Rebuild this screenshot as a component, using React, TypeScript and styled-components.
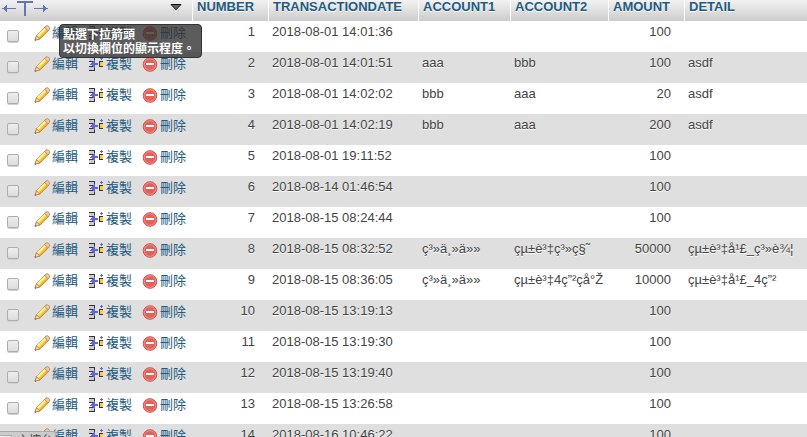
import React, { useState } from 'react';
import styled, { createGlobalStyle } from 'styled-components';

const GlobalStyle = createGlobalStyle`
  * { box-sizing: border-box; }
  body {
    margin: 0;
    background: #fff;
    color: #444;
    font-family: "Liberation Sans", "Noto Sans CJK TC", sans-serif;
    font-size: 13px;
    line-height: 15px;
  }
`;

const Page = styled.main`
  position: relative;
  height: 100vh;
  overflow: hidden;
`;

const Table = styled.table`
  width: 100%;
  table-layout: fixed;
  border-collapse: separate;
  border-spacing: 0;
`;

const Column = styled.col<{ $width?: number }>`
  width: ${(p) => (p.$width ? `${p.$width}px` : 'auto')};
`;

const HeadRow = styled.tr`
  height: 21px;
  background: linear-gradient(#f2f2f2, #cccccc);
`;

const HeadCell = styled.th<{ $end?: boolean }>`
  padding: 0 14px 7px 4px;
  border-right: 1px solid #fff;
  color: #235a81;
  font-weight: bold;
  text-align: ${(p) => (p.$end ? 'right' : 'left')};
  text-shadow: 0 1px 0 #fff;
  vertical-align: top;
  white-space: nowrap;
  line-height: 14px;
  &:last-child { border-right: 0; }
`;

const ToolHead = styled.th`
  padding: 0 10px 0 2px;
  border-right: 1px solid #fff;
  vertical-align: top;
`;

const ToolBar = styled.div`
  display: flex;
  justify-content: space-between;
  align-items: flex-start;
  svg:last-child { margin-top: 4px; }
`;

const Row = styled.tr`
  height: 31px;
  &:nth-child(even) { background: #dfdfdf; }
`;

const Cell = styled.td<{ $end?: boolean }>`
  padding: 3px 14px 0 3px;
  text-align: ${(p) => (p.$end ? 'right' : 'left')};
  text-shadow: 0 1px 0 #fff;
  vertical-align: top;
  white-space: nowrap;
`;

const ActionCell = styled.td`
  padding: 0 0 0 7px;
  vertical-align: top;
`;

const Actions = styled.div`
  display: flex;
  align-items: flex-start;
`;

const Check = styled.input`
  appearance: none;
  flex: none;
  width: 12px;
  height: 12px;
  margin: 9px 15px 0 0;
  border: 1px solid #adadad;
  border-radius: 2px;
  background: linear-gradient(#eeeeee, #dcdcdc);
  box-shadow: 0 1px 0 #d0d0d0;
  &:checked { background: #235a81; }
`;

const Action = styled.a`
  display: flex;
  flex: none;
  width: 54px;
  gap: 2px;
  padding-top: 4px;
  color: #235a81;
  text-decoration: none;
  white-space: nowrap;
  svg { flex: none; }
`;

const Tooltip = styled.div`
  position: absolute;
  top: 24px;
  left: 59px;
  padding: 3px 6px 1px 3px;
  border: 1px solid #333;
  border-radius: 4px;
  background: rgba(51, 51, 51, 0.8);
  color: #fff;
  font-weight: bold;
  white-space: nowrap;
  font-size: 12px;
  line-height: 14px;
`;

const StatusBubble = styled.div`
  position: absolute;
  left: 0;
  bottom: -14px;
  display: flex;
  gap: 5px;
  height: 20px;
  padding-right: 2px;
  border: 1px solid #aaa;
  border-left: 0;
  border-radius: 0 3px 0 0;
  background: #ccc;
  font-size: 12px;
  line-height: 18px;
  white-space: nowrap;
`;

const StatusMark = styled.span`
  width: 12px;
  height: 15px;
  margin-top: 3px;
  border: 1px solid #aaa;
  border-left: 0;
  background: linear-gradient(90deg, #fff, #ddd);
`;

const ResizeIcon = () => (
  <svg width="46" height="17" viewBox="0 0 46 17" fill="none" stroke="#6275b5" shapeRendering="crispEdges" aria-hidden="true">
    <path d="M0 8.5H14M2 7.5h3M2 9.5h3M3 6.5h2M3 10.5h2M4 5.5h1M4 11.5h1M32 8.5H46M41 7.5h3M41 9.5h3M41 6.5h2M41 10.5h2M41 5.5h1M41 11.5h1" />
    <path d="M15 2H31M23 2V16" strokeWidth="2" />
  </svg>
);

const ArrowIcon = () => (
  <svg width="12" height="7" viewBox="0 0 12 7" aria-hidden="true">
    <path d="M1 .5H11L6 5.7Z" fill="#666" stroke="#111" />
  </svg>
);

const PencilIcon = () => (
  <svg width="16" height="16" viewBox="0 0 16 16" aria-hidden="true">
    <path d="M1.5 14.8L2.6 10.4L11 2L14.6 5.6L6 14Z" fill="#f9d64e" stroke="#c08a35" />
    <path d="M3.6 11L11.2 3.4" stroke="#fff3a8" strokeWidth="2" />
    <path d="M5.7 13L13.5 5.2" stroke="#e9ae38" strokeWidth="1.2" />
    <path d="M10.6 2.4L12 1Q13.4.2 14.8 1.5T15.3 4.4L14.1 5.9Z" fill="#f5c8a4" stroke="#c08452" strokeWidth=".9" />
    <path d="M1 15.2L2.5 10.7L5.8 14Z" fill="#f3d9b5" stroke="#b57c42" strokeWidth=".8" />
    <path d="M.8 14L2.2 15.4H.8Z" fill="#5a4025" />
  </svg>
);

const CopyIcon = () => (
  <svg width="16" height="16" viewBox="0 0 16 16" shapeRendering="crispEdges" aria-hidden="true">
    <path d="M1 2h5v3H1zM1 11h5v3H1z" fill="#ccc" />
    <path d="M1 1.5h6M6.5 1v3M1 5.5h4M1 10.5h4M6.5 12v3M1 14.5h6" stroke="#333" />
    <path d="M2 8h1V7h1V6h1V5h1V4h1v3h3v2H7v3H6v-1H5v-1H4V9H2z" fill="#6464d2" />
    <path d="M11 5h4v6h-4z" fill="#333" />
    <path d="M12 6h3v4h-3z" fill="#fc3" />
    <path d="M12 2.5h3M13.5 1v3" stroke="#6464d2" />
  </svg>
);

const DeleteIcon = () => (
  <svg width="16" height="16" viewBox="0 0 16 16" aria-hidden="true">
    <circle cx="8" cy="8.5" r="6.8" fill="#e4605a" stroke="#cf5049" />
    <circle cx="8" cy="8.5" r="5.8" fill="none" stroke="#f0958c" strokeWidth=".9" />
    <rect x="4" y="7" width="8" height="2" fill="#fff" />
  </svg>
);

type TransactionRecord = [number, string, string, string, number, string];

const records: TransactionRecord[] = [
  [1, '2018-08-01 14:01:36', '', '', 100, ''],
  [2, '2018-08-01 14:01:51', 'aaa', 'bbb', 100, 'asdf'],
  [3, '2018-08-01 14:02:02', 'bbb', 'aaa', 20, 'asdf'],
  [4, '2018-08-01 14:02:19', 'bbb', 'aaa', 200, 'asdf'],
  [5, '2018-08-01 19:11:52', '', '', 100, ''],
  [6, '2018-08-14 01:46:54', '', '', 100, ''],
  [7, '2018-08-15 08:24:44', '', '', 100, ''],
  [8, '2018-08-15 08:32:52', 'ç³»ä¸»ä»»', 'çµ±è³‡ç³»ç§˜', 50000, 'çµ±è³‡å¹£_ç³»è¾¦'],
  [9, '2018-08-15 08:36:05', 'ç³»ä¸»ä»»', 'çµ±è³‡4ç”²çå°Ž', 10000, 'çµ±è³‡å¹£_4ç”²'],
  [10, '2018-08-15 13:19:13', '', '', 100, ''],
  [11, '2018-08-15 13:19:30', '', '', 100, ''],
  [12, '2018-08-15 13:19:40', '', '', 100, ''],
  [13, '2018-08-15 13:26:58', '', '', 100, ''],
  [14, '2018-08-16 10:46:22', '', '', 100, ''],
];

const RecordRow = ({ record }: { record: TransactionRecord }) => {
  const [checked, setChecked] = useState(false);
  const [number, date, account1, account2, amount, detail] = record;
  return (
    <Row>
      <ActionCell>
        <Actions>
          <Check type="checkbox" aria-label={String(number)} checked={checked} onChange={(e) => setChecked(e.target.checked)} />
          <Action href="#edit"><PencilIcon />編輯</Action>
          <Action href="#copy"><CopyIcon />複製</Action>
          <Action href="#delete"><DeleteIcon />刪除</Action>
        </Actions>
      </ActionCell>
      <Cell $end>{number}</Cell>
      <Cell>{date}</Cell>
      <Cell>{account1}</Cell>
      <Cell>{account2}</Cell>
      <Cell $end>{amount}</Cell>
      <Cell>{detail}</Cell>
    </Row>
  );
};

export default function App() {
  return (
    <Page>
      <GlobalStyle />
      <Table>
        <colgroup>
          <Column $width={193} />
          <Column $width={76} />
          <Column $width={150} />
          <Column $width={92} />
          <Column $width={98} />
          <Column $width={76} />
          <Column />
        </colgroup>
        <thead>
          <HeadRow>
            <ToolHead>
              <ToolBar><ResizeIcon /><ArrowIcon /></ToolBar>
            </ToolHead>
            <HeadCell $end>NUMBER</HeadCell>
            <HeadCell>TRANSACTIONDATE</HeadCell>
            <HeadCell>ACCOUNT1</HeadCell>
            <HeadCell>ACCOUNT2</HeadCell>
            <HeadCell $end>AMOUNT</HeadCell>
            <HeadCell>DETAIL</HeadCell>
          </HeadRow>
        </thead>
        <tbody>
          {records.map((record) => <RecordRow key={record[0]} record={record} />)}
        </tbody>
      </Table>
      <Tooltip role="tooltip">點選下拉箭頭<br />以切換欄位的顯示程度。</Tooltip>
      <StatusBubble><StatusMark />主控台</StatusBubble>
    </Page>
  );
}
